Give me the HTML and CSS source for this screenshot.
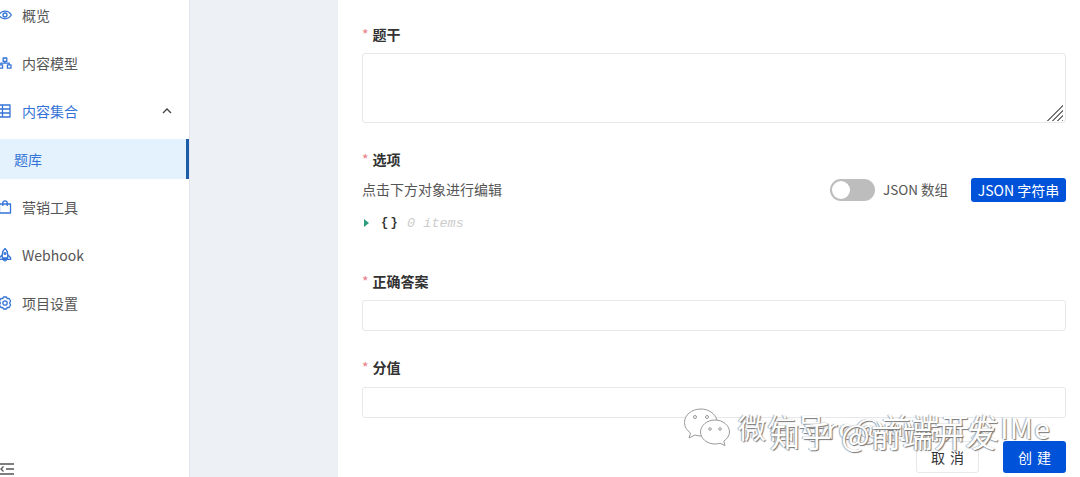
FILE: index.html
```html
<!DOCTYPE html>
<html lang="zh-CN">
<head>
    <meta charset="UTF-8">
    <title>题库</title>
    <link rel="stylesheet" href="styles.css">
</head>
<body>
    <div class="app">
        <aside class="sidebar">
            <nav class="menu">
                <a class="menu-item">
                    <svg class="menu-icon" viewBox="0 0 14 14"><path d="M.7 7C2.200 4.500 4.400 3.200 7 3.200S11.800 4.500 13.300 7C11.800 9.500 9.600 10.800 7 10.800S2.200 9.500.7 7Z"/><circle cx="7" cy="7" r="2"/></svg>
                    概览
                </a>
                <a class="menu-item">
                    <svg class="menu-icon" viewBox="0 0 14 14"><rect x="5.200" y="2" width="3.600" height="3.400"/><rect x="1" y="8.800" width="3.600" height="3.400"/><rect x="9.400" y="8.800" width="3.600" height="3.400"/><path d="M7 5.400V7.200M2.800 8.800V7.200H11.200V8.800"/></svg>
                    内容模型
                </a>
                <a class="menu-item is-open">
                    <svg class="menu-icon" viewBox="0 0 14 14"><rect x="1" y="1" width="11" height="12"/><path d="M1 5H12M1 9H12M4.500 1V13"/></svg>
                    内容集合
                    <svg class="chevron" viewBox="0 0 10 6"><path d="M1 5 5 1 9 5"/></svg>
                </a>
                <a class="menu-item sub-item">题库</a>
                <a class="menu-item">
                    <svg class="menu-icon" viewBox="0 0 14 14"><path d="M1.500 4H12.500V13H1.500ZM4.800 6V3A2.200 2.200 0 0 1 9.200 3V6"/></svg>
                    营销工具
                </a>
                <a class="menu-item">
                    <svg class="menu-icon" viewBox="0 0 14 14"><path d="M7 .6C8.900 2.200 9.700 4.200 9.700 6.200V10H4.300V6.200C4.300 4.200 5.100 2.200 7 .6ZM4.300 6.800 1.400 9.800V11.400H12.600V9.800L9.700 6.800M5.500 11.400A1.500 1.500 0 0 0 8.500 11.400"/><circle cx="7" cy="5.500" r=".9"/></svg>
                    Webhook
                </a>
                <a class="menu-item">
                    <svg class="menu-icon" viewBox="0 0 14 14"><path d="M5.500 1H8.500L9.300 2.600 11.100 2.500 12.600 5 11.600 7 12.600 9 11.100 11.500 9.300 11.400 8.500 13H5.500L4.700 11.400 2.900 11.500 1.400 9 2.400 7 1.400 5 2.900 2.500 4.700 2.600Z"/><circle cx="7" cy="7" r="2.200"/></svg>
                    项目设置
                </a>
            </nav>
            <svg class="collapse" viewBox="0 0 14 12"><path d="M0 1H14M6 6H14M0 11H14M3.500 3.500 1 6 3.500 8.500"/></svg>
        </aside>

        <div class="gutter"></div>

        <main class="form-panel">
            <div class="field">
                <label class="field-label">题干</label>
                <div class="textarea"><span class="resize-grip"></span></div>
            </div>

            <div class="field">
                <label class="field-label">选项</label>
                <div class="editor-bar">
                    <span class="hint">点击下方对象进行编辑</span>
                    <div class="editor-modes">
                        <span class="switch"><span class="switch-knob"></span></span>
                        <span class="switch-text">JSON 数组</span>
                        <button class="btn btn-primary btn-small">JSON 字符串</button>
                    </div>
                </div>
                <div class="json-tree">
                    <span class="caret"></span>
                    <span class="braces">{ }</span>
                    <span class="item-count">0 items</span>
                </div>
            </div>

            <div class="field">
                <label class="field-label">正确答案</label>
                <div class="input"></div>
            </div>

            <div class="field field-last">
                <label class="field-label">分值</label>
                <div class="input"></div>
            </div>

            <div class="actions">
                <button class="btn btn-default">取消</button>
                <button class="btn btn-primary">创建</button>
            </div>
        </main>
    </div>

    <div class="watermark">
        <svg class="wechat" viewBox="0 0 48 38"><path d="M18 1C8.600 1 1.500 7 1.500 14.500C1.500 18.800 4 22.500 7.500 25L6 30 12 27C14 27.700 16 28 18 28C24 28 20 21 25 17C29 14 34 14.500 34 12C32 5.500 25.500 1 18 1Z"/><path d="M32 12C24 12 17.500 17.500 17.500 24C17.500 30.500 24 36 32 36C34 36 35.500 35.700 37 35.200L42 37.500 40.800 33.200C44 31 46.500 27.800 46.500 24C46.500 17.500 40 12 32 12Z"/><circle cx="12" cy="9" r="1.500"/><circle cx="24" cy="9" r="1.500"/><circle cx="27" cy="21" r="1.300"/><circle cx="37" cy="21" r="1.300"/></svg>
        <span class="wm-text wm-back">微信号rc@前端开发IMe</span>
        <span class="wm-text wm-front">知乎 @前端开发</span>
    </div>
</body>
</html>
```

FILE: styles.css
```css
* {
    box-sizing: border-box;
}

html, body {
    height: 100%;
    margin: 0;
    overflow: hidden;
}

body {
    font-family: "Noto Sans CJK SC", "Noto Sans", sans-serif;
    font-size: 14px;
    color: #555;
    background-color: #fff;
}

.app {
    display: flex;
    height: 477px;
}

/* sidebar */
.sidebar {
    width: 190px;
    display: flex;
    flex-direction: column;
    justify-content: space-between;
    border-right: 1px solid #e3e6ec;
    background-color: #fff;
}

.menu {
    display: flex;
    flex-direction: column;
    gap: 8px;
    margin-top: -5px;
}

.menu-item {
    display: flex;
    align-items: center;
    gap: 10px;
    height: 40px;
    line-height: 40px;
}

.menu-icon {
    width: 14px;
    height: 14px;
    margin-left: -2px;
    flex-shrink: 0;
    fill: none;
    stroke: #3574d6;
    stroke-width: 1.300;
    stroke-linejoin: round;
}

.is-open {
    color: #3574d6;
}

.chevron {
    width: 10px;
    height: 6px;
    margin-left: 74px;
    fill: none;
    stroke: #444;
    stroke-width: 1.400;
}

.sub-item {
    padding-left: 14px;
    color: #3574d6;
    background-color: #e3f2fd;
    border-right: 3px solid #1a5ca8;
}

.collapse {
    width: 14px;
    height: 12px;
    margin-bottom: 2px;
    fill: none;
    stroke: #555;
    stroke-width: 1.300;
}

.gutter {
    width: 148px;
    background-color: #edf0f5;
}

/* form */
.form-panel {
    flex: 1;
    padding: 23px 14px 0 24px;
}

.field {
    margin-bottom: 25px;
}

.field-label {
    display: block;
    height: 22px;
    line-height: 22px;
    margin-bottom: 8px;
    font-weight: 700;
    color: #333;
}

.field-last .field-label {
    margin-bottom: 9px;
}

.field-label::before {
    content: "*";
    margin-right: 4px;
    font-weight: 400;
    color: #e8808a;
}

.textarea {
    position: relative;
    height: 70px;
    border: 1px solid #e6e8ec;
    border-radius: 3px;
}

.resize-grip {
    position: absolute;
    right: 2px;
    bottom: 1px;
    width: 17px;
    height: 17px;
    background: repeating-linear-gradient(135deg, transparent 0, transparent 2px, #777 2px, #777 3.500px);
    clip-path: polygon(100% 0, 100% 100%, 0 100%);
}

.input {
    height: 31px;
    border: 1px solid #e6e8ec;
    border-radius: 3px;
}

.editor-bar {
    display: flex;
    justify-content: space-between;
    align-items: center;
    height: 24px;
    margin-top: -1px;
}

.editor-modes {
    display: flex;
    align-items: center;
}

.switch {
    display: flex;
    align-items: center;
    width: 45px;
    height: 22px;
    margin-top: 2px;
    padding-left: 2px;
    border-radius: 11px;
    background-color: #bdbdbd;
}

.switch-knob {
    width: 18px;
    height: 18px;
    border-radius: 50%;
    background-color: #fff;
}

.switch-text {
    width: 96px;
    padding-left: 8px;
    font-size: 13.500px;
}

.btn {
    border: none;
    border-radius: 3px;
    font-family: inherit;
    font-size: 14px;
    cursor: pointer;
}

.btn-primary {
    color: #fff;
    background-color: #0052d9;
}

.btn-small {
    width: 95px;
    height: 24px;
    margin-top: 2px;
    padding: 0;
}

.json-tree {
    display: flex;
    align-items: center;
    height: 20px;
    margin-top: 12px;
    margin-bottom: 37px;
    font-family: "Liberation Mono", monospace;
    font-size: 13.500px;
}

.caret {
    width: 0;
    height: 0;
    margin-left: 2px;
    border-left: 5px solid #2f9e7e;
    border-top: 4.500px solid transparent;
    border-bottom: 4.500px solid transparent;
}

.braces {
    margin-left: 12px;
    font-size: 12px;
    font-weight: 700;
    letter-spacing: -2.500px;
    color: #333;
}

.item-count {
    margin-left: 12px;
    font-style: italic;
    color: #ccc;
}

.actions {
    display: flex;
    justify-content: flex-end;
    gap: 24px;
    margin-top: -2px;
}

.actions .btn {
    width: 63px;
    height: 32px;
    padding: 0 0 0 5px;
    letter-spacing: 5px;
}

.btn-default {
    color: #333;
    background-color: #fff;
    border: 1px solid #e6e8ec;
}

/* watermark sits over the form */
.watermark {
    position: absolute;
    left: 683px;
    top: 400px;
    width: 397px;
    height: 60px;
    pointer-events: none;
}

.wechat {
    position: absolute;
    left: 0;
    top: 8px;
    width: 48px;
    height: 38px;
    fill: #fff;
    stroke: #999;
    stroke-width: 1;
}

.wm-text {
    position: absolute;
    white-space: nowrap;
    color: #fff;
    text-shadow: 1px 1px 1px #777, -1px 0 1px #aaa;
}

.wm-back {
    left: 55px;
    top: 7px;
    font-size: 28px;
    letter-spacing: 1.500px;
}

.wm-front {
    left: 87px;
    top: 12px;
    font-size: 30px;
    letter-spacing: 1.500px;
}
```
